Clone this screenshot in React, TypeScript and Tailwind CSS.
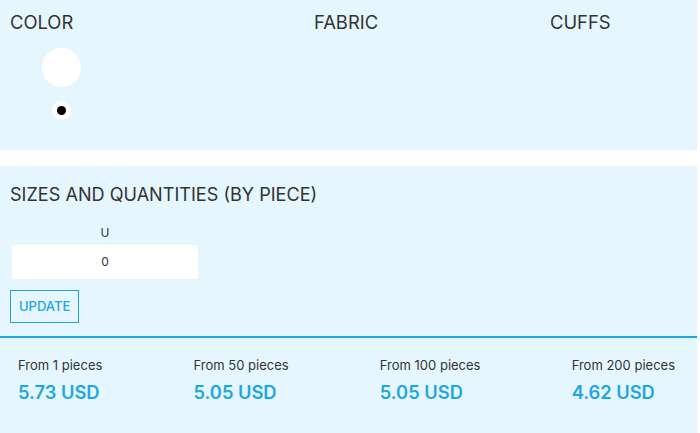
const prices = [
  { from: 1, price: "5.73" },
  { from: 50, price: "5.05" },
  { from: 100, price: "5.05" },
  { from: 200, price: "4.62" },
];

export default function App() {
  return (
    <div className="min-h-[433px] w-[700px] bg-white font-['Inter',sans-serif] text-[#333]">
      {/* Options */}
      <section className="mr-[3px] h-[150px] bg-[#e5f6fe] px-[10px] pt-[12px]">
        <div className="flex">
          <div className="w-[304px]">
            <h3 className="text-[18.4px] leading-[20px]">COLOR</h3>
            <div className="flex w-[102px] flex-col items-center pt-[16px]">
              <div className="h-[39px] w-[39px] rounded-full bg-white" />
              <div className="mt-[14px] flex h-[19px] w-[19px] items-center justify-center rounded-full bg-white">
                <div className="h-[9px] w-[9px] rounded-full bg-black" />
              </div>
            </div>
          </div>
          <div className="w-[236px]">
            <h3 className="text-[18.4px] leading-[20px]">FABRIC</h3>
          </div>
          <div>
            <h3 className="text-[18.4px] leading-[20px]">CUFFS</h3>
          </div>
        </div>
      </section>

      <div className="h-[16px]" />

      {/* Sizes */}
      <section className="mr-[3px] bg-[#e5f6fe]">
        <div className="px-[10px] pt-[17px] pb-[13px]">
          <h3 className="text-[18.1px] leading-[22px]">SIZES AND QUANTITIES (BY PIECE)</h3>
          <div className="mt-[21px] ml-[2px] w-[186px] text-center text-[12px]">
            <div className="leading-[14px]">U</div>
            <div className="mt-[5px] flex h-[34px] items-center justify-center rounded-[2px] bg-white">
              0
            </div>
          </div>
          <button className="mt-[11px] h-[33px] border-[1.5px] border-[#1ea6e4] px-[8px] text-[13px] font-medium text-[#1ea6e4]">
            UPDATE
          </button>
        </div>
        <div className="h-[2px] bg-[#1ea6e4]" />
        <div className="flex justify-between pt-[19px] pb-[34px] pl-[18px] pr-[22px]">
          {prices.map((p) => (
            <div key={p.from}>
              <div className="text-[13px] leading-[16px]">From {p.from} pieces</div>
              <div className="mt-[8px] text-[18.3px] font-semibold leading-[22px] text-[#1ea6e4]">
                {p.price} USD
              </div>
            </div>
          ))}
        </div>
      </section>
    </div>
  );
}
